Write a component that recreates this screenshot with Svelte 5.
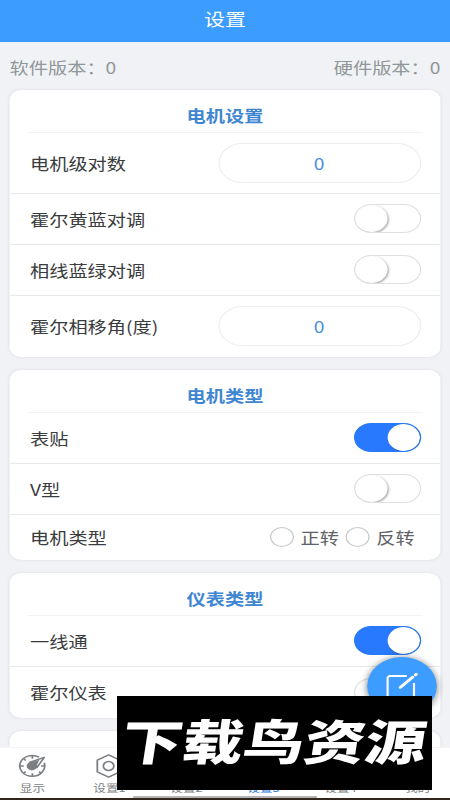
<script lang="ts">
	type Row = { label: string; kind: 'input' | 'switch' | 'radio'; value?: number; on?: boolean; options?: string[] };
	type Group = { title: string; rows: Row[] };

	let groups: Group[] = $state([
		{
			title: '电机设置',
			rows: [
				{ label: '电机级对数', kind: 'input', value: 0 },
				{ label: '霍尔黄蓝对调', kind: 'switch', on: false },
				{ label: '相线蓝绿对调', kind: 'switch', on: false },
				{ label: '霍尔相移角(度)', kind: 'input', value: 0 }
			]
		},
		{
			title: '电机类型',
			rows: [
				{ label: '表贴', kind: 'switch', on: true },
				{ label: 'V型', kind: 'switch', on: false },
				{ label: '电机类型', kind: 'radio', options: ['正转', '反转'] }
			]
		},
		{
			title: '仪表类型',
			rows: [
				{ label: '一线通', kind: 'switch', on: true },
				{ label: '霍尔仪表', kind: 'switch', on: false }
			]
		}
	]);

	const tabs = ['显示', '设置1', '设置2', '设置3', '设置4', '我的'];
	let active = $state(3);
</script>

<div class="screen">
	<!-- 375px layout, widened to fill the screen -->
	<div class="phone">
		<header>设置</header>

		<main>
			<div class="versions">
				<span>软件版本：0</span>
				<span>硬件版本：0</span>
			</div>

			{#each groups as group}
				<section class="card">
					<h2>{group.title}</h2>
					{#each group.rows as row}
						<div class="row {row.kind}">
							<span class="label">{row.label}</span>
							{#if row.kind === 'input'}
								<input type="text" bind:value={row.value} aria-label={row.label} />
							{:else if row.kind === 'switch'}
								<button
									class="toggle"
									class:on={row.on}
									role="switch"
									aria-checked={row.on}
									aria-label={row.label}
									onclick={() => (row.on = !row.on)}
								></button>
							{:else}
								<div class="radios">
									{#each row.options ?? [] as option}
										<span class="radio-item"><i class="circle"></i>{option}</span>
									{/each}
								</div>
							{/if}
						</div>
					{/each}
				</section>
			{/each}
			<section class="card next"></section>
		</main>

		<nav>
			{#each tabs as tab, i}
				<button class="tab" class:active={active === i} onclick={() => (active = i)}>
					{#if i === 0}
						<!-- gauge -->
						<svg width="24" height="24" viewBox="0 0 24 24" fill="none" stroke="currentColor" stroke-width="1.5">
							<path d="M17.6 3.2A10.4 10.4 0 1 0 21.8 8.8" />
							<path d="M12 1.8v3M1.8 12h3M19.2 12h3M12 19.2v3M5 5l1.5 1.5M5 19l1.4-1.4M19 19l-1.4-1.4" />
							<path d="M9.5 8.4L21.8 3.4L15.4 14.2" stroke-linejoin="round" />
							<circle cx="11.6" cy="12" r="4.4" fill="currentColor" stroke="none" />
							<path d="M10.5 8.3l7.4-2.5-3 7.1z" fill="currentColor" stroke="none" />
						</svg>
					{:else}
						<svg width="24" height="24" viewBox="0 0 24 24" fill="none" stroke="currentColor" stroke-width="1.5" stroke-linejoin="round">
							<path d="M11.5 0.9L20.9 6.2V17.8L11.5 23.1L2.1 17.8V6.2Z" />
							<circle cx="11.5" cy="12" r="4.4" />
						</svg>
					{/if}
					<span>{tab}</span>
				</button>
			{/each}
		</nav>
		<div class="home-bar"></div>

		<button class="fab" aria-label="编辑">
			<svg width="28" height="28" viewBox="0 0 28 28" fill="none" stroke="#fff" stroke-width="1.8">
				<path d="M18 4H4a2 2 0 0 0-2 2v18a2 2 0 0 0 2 2h18a2 2 0 0 0 2-2V11" />
				<path d="M12.5 15.5L23 5" stroke-width="2.5" stroke-linecap="round" />
				<path d="M25.2 2.9l.6-.6" stroke-width="2.8" stroke-linecap="round" />
			</svg>
		</button>
	</div>

	<div class="banner"><span>下载鸟资源</span></div>
</div>

<style>
	.screen {
		position: relative;
		width: 450px;
		height: 800px;
		overflow: hidden;
	}

	.phone {
		position: relative;
		display: flex;
		flex-direction: column;
		width: 375px;
		height: 800px;
		transform: scaleX(1.2);
		transform-origin: 0 0;
		background: #f1f2f5;
		font-family: 'Noto Sans CJK SC', sans-serif;
	}

	button {
		padding: 0;
		border: none;
		background: none;
		font: inherit;
		cursor: pointer;
	}

	header {
		flex: none;
		height: 42px;
		line-height: 37px;
		background: #3c9cff;
		color: #fff;
		font-size: 17.5px;
		text-align: center;
	}

	main {
		flex: 1;
		min-height: 0;
		overflow: hidden;
		padding: 0 8px;
	}

	.versions {
		display: flex;
		justify-content: space-between;
		height: 47.5px;
		line-height: 50px;
		box-sizing: border-box;
		font-size: 16px;
		color: #909799;
	}

	.card {
		margin-bottom: 13px;
		background: #fff;
		border-radius: 10px;
		box-shadow: 0 0 2px 1px #e6e8ec;
		overflow: hidden;
	}

	.card.next {
		height: 60px;
	}

	h2 {
		height: 43px;
		line-height: 50px;
		margin: 0 15px;
		box-sizing: border-box;
		border-bottom: 1px solid #f2f3f5;
		color: #3f86d2;
		font-size: 16px;
		font-weight: 700;
		text-align: center;
	}

	.row {
		display: flex;
		align-items: center;
		justify-content: space-between;
		height: 51px;
		padding: 0 16.5px 0 17px;
		box-sizing: border-box;
		border-bottom: 1px solid #e6e8eb;
	}

	.row.input {
		height: 61px;
	}

	.row.radio {
		height: 45px;
	}

	.row:last-child {
		border-bottom: none;
	}

	.label {
		font-size: 16px;
		color: #3a3c3e;
	}

	input {
		width: 169px;
		height: 40px;
		padding: 0;
		box-sizing: border-box;
		border: 1px solid #ededf0;
		border-radius: 20px;
		outline: none;
		background: #fff;
		color: #4a90dc;
		font: inherit;
		font-size: 16px;
		text-align: center;
	}

	.toggle {
		display: flex;
		width: 56px;
		height: 29px;
		padding: 0;
		box-sizing: border-box;
		border: 1px solid #dfdfe1;
		border-radius: 15px;
		background: #fff;
		overflow: hidden;
	}

	.toggle::before {
		content: '';
		width: 27px;
		height: 27px;
		border-radius: 50%;
		background: #fff;
		box-shadow: 1px 1px 2px rgba(0, 0, 0, 0.35);
	}

	.toggle.on {
		justify-content: flex-end;
		border-color: #2979f2;
		background: #2979ff;
	}

	.radios {
		display: flex;
		gap: 5.5px;
		padding-right: 5px;
		color: #5f6266;
		font-size: 16px;
	}

	.radio-item {
		display: flex;
		align-items: center;
		gap: 5.5px;
	}

	.circle {
		width: 20px;
		height: 20px;
		box-sizing: border-box;
		border: 1px solid #c8c9cc;
		border-radius: 50%;
	}

	nav {
		flex: none;
		display: flex;
		justify-content: space-between;
		height: 51px;
		padding: 0 7px;
		box-sizing: border-box;
		border-top: 1px solid #f4f4f6;
		background: #fff;
	}

	.tab {
		display: flex;
		flex-direction: column;
		align-items: center;
		gap: 2px;
		width: 40px;
		padding-top: 6px;
		color: #7c7f83;
		font-size: 10.5px;
		line-height: 15px;
	}

	.tab.active {
		color: #2c7be0;
	}

	.home-bar {
		flex: none;
		height: 2px;
		background: #33261f;
	}

	.home-bar::before {
		content: '';
		position: absolute;
		bottom: 2px;
		left: 111px;
		width: 153px;
		height: 2px;
		background: #b5b5b5;
	}

	.fab {
		position: absolute;
		left: 306px;
		top: 657px;
		display: flex;
		align-items: center;
		justify-content: center;
		width: 58px;
		height: 58px;
		border-radius: 50%;
		background: #3c9cff;
		box-shadow: 0 1px 6px 1px rgba(0, 0, 0, 0.4);
	}

	.banner {
		position: absolute;
		left: 117px;
		top: 696px;
		display: flex;
		align-items: center;
		justify-content: center;
		width: 315px;
		height: 94px;
		background: #000;
		color: #fff;
	}

	.banner span {
		font-family: 'Noto Sans CJK SC', sans-serif;
		font-size: 48px;
		font-weight: 900;
		line-height: 87px;
		height: 94px;
		white-space: nowrap;
		transform: scaleX(1.27) skewX(-7deg);
	}
</style>
